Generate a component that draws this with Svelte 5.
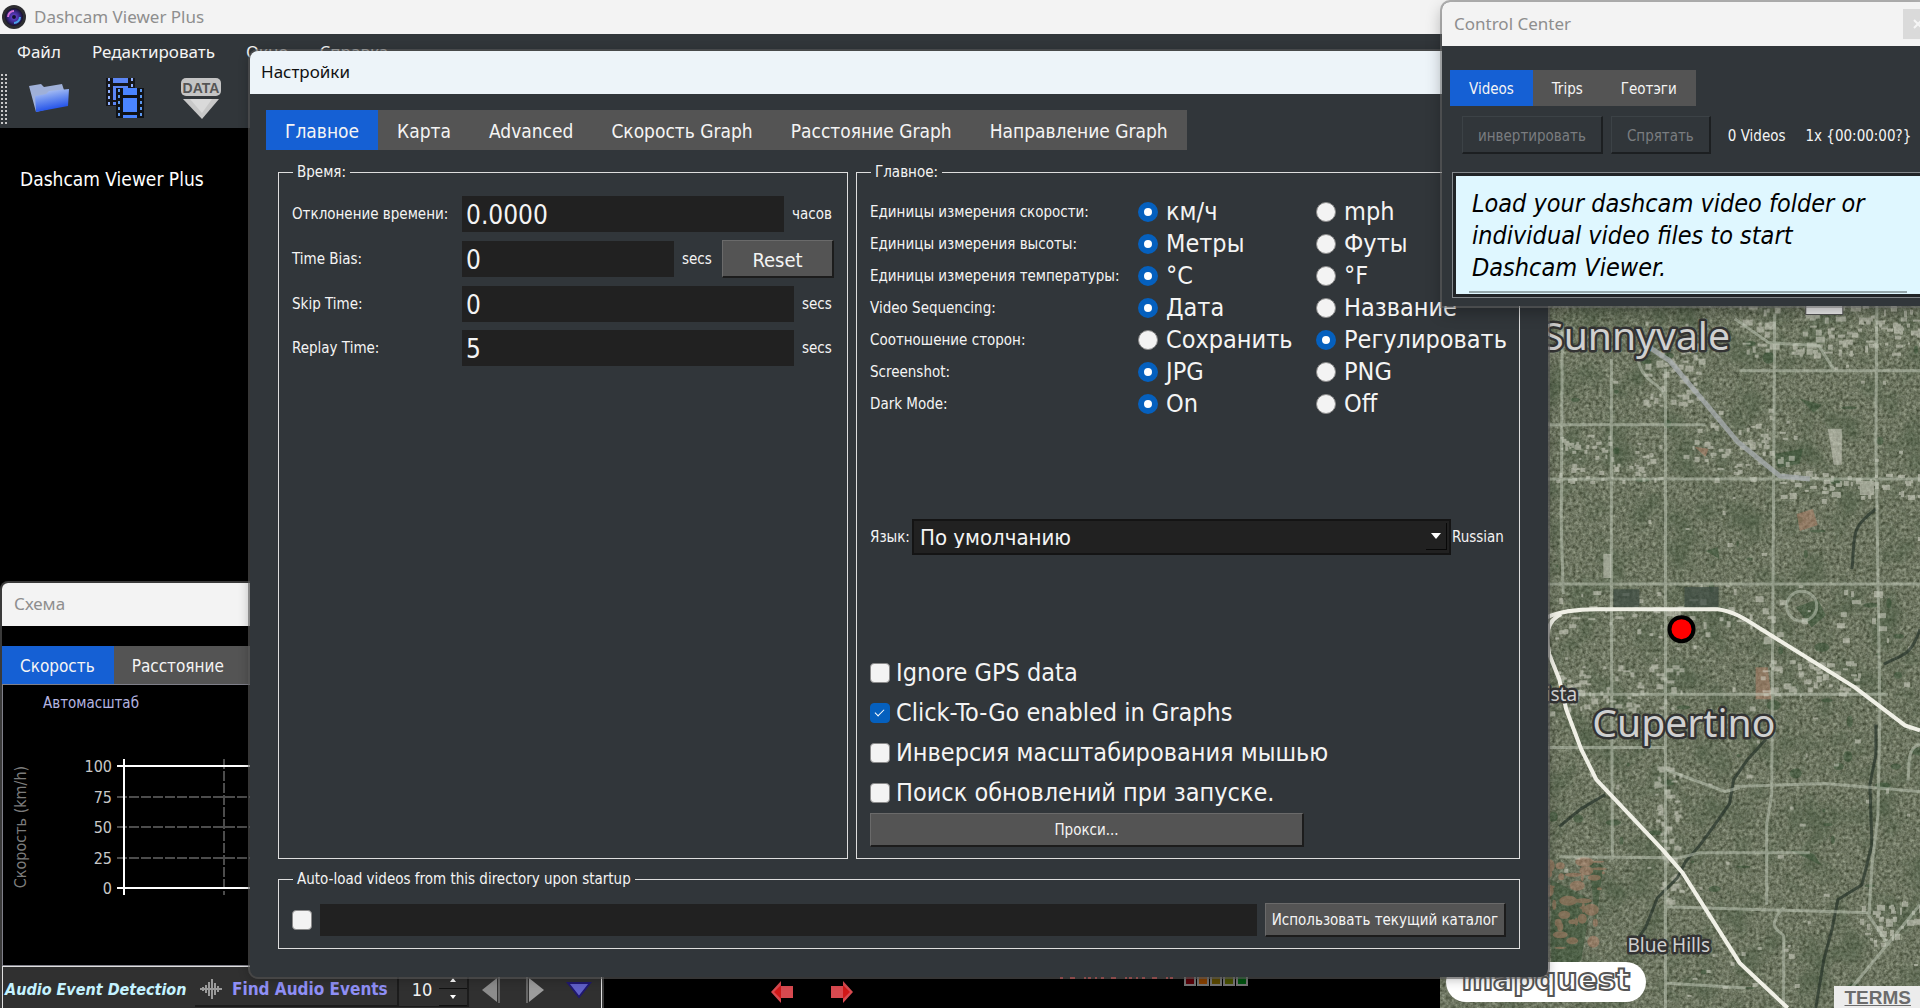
<script lang="ts">
	interface Choice {
		name: string;
		label: string;
		options: [string, string];
		picked: number;
	}

	const menus = ['Файл', 'Редактировать', 'Окно', 'Справка'];
	const settingsTabs = [
		'Главное',
		'Карта',
		'Advanced',
		'Скорость Graph',
		'Расстояние Graph',
		'Направление Graph'
	];
	const chartTabs = ['Скорость', 'Расстояние', 'Направление'];
	const centerTabs = ['Videos', 'Trips', 'Геотэги'];

	let choices: Choice[] = $state([
		{ name: 'speed', label: 'Единицы измерения скорости:', options: ['км/ч', 'mph'], picked: 0 },
		{ name: 'height', label: 'Единицы измерения высоты:', options: ['Метры', 'Футы'], picked: 0 },
		{ name: 'temp', label: 'Единицы измерения температуры:', options: ['°C', '°F'], picked: 0 },
		{ name: 'sequence', label: 'Video Sequencing:', options: ['Дата', 'Название'], picked: 0 },
		{ name: 'aspect', label: 'Соотношение сторон:', options: ['Сохранить', 'Регулировать'], picked: 1 },
		{ name: 'shot', label: 'Screenshot:', options: ['JPG', 'PNG'], picked: 0 },
		{ name: 'dark', label: 'Dark Mode:', options: ['On', 'Off'], picked: 0 }
	]);

	let checks = $state([
		{ label: 'Ignore GPS data', on: false },
		{ label: 'Click-To-Go enabled in Graphs', on: true },
		{ label: 'Инверсия масштабирования мышью', on: false },
		{ label: 'Поиск обновлений при запуске.', on: false }
	]);

	let offset = $state('0.0000');
	let bias = $state('0');
	let skip = $state('0');
	let replay = $state('5');
	let autoload = $state(false);
	let directory = $state('');
	let audioCount = $state(10);
	let settingsTab = $state(0);
	let chartTab = $state(0);
	let centerTab = $state(0);

	const ticks = [100, 75, 50, 25, 0];
	const leds = ['#5a0008', '#8a4200', '#5c4a00', '#4a5200', '#005410'];

	// small repeatable generator, so the ground cover is the same on every load
	let seed = 11;
	function rnd() {
		seed = (seed * 16807) % 2147483647;
		return seed / 2147483647;
	}

	function patches(n: number, x: number, y: number, w: number, h: number, size: number) {
		return Array.from({ length: n }, () => ({
			x: Math.round(x + rnd() * w),
			y: Math.round(y + rnd() * h),
			w: Math.round(2 + rnd() * size),
			h: Math.round(2 + rnd() * size * 0.7)
		}));
	}

	const roofs = [
		...patches(90, 1740, 305, 180, 50, 8),
		...patches(50, 1640, 345, 60, 60, 7),
		...patches(50, 1690, 420, 100, 60, 5),
		...patches(60, 1550, 435, 110, 50, 4),
		...patches(50, 1780, 470, 140, 30, 6),
		...patches(70, 1550, 665, 130, 45, 6),
		...patches(50, 1760, 660, 100, 35, 6),
		...patches(50, 1655, 760, 22, 140, 5),
		...patches(60, 1550, 590, 340, 50, 7),
		...patches(30, 1860, 900, 60, 40, 8),
		...patches(120, 1548, 310, 372, 690, 4)
	];
	const woods = patches(60, 1548, 330, 372, 670, 14);
	const soil = patches(34, 1548, 860, 60, 90, 16);
</script>

<div class="desktop">
	<main class="main-window">
		<header class="title-bar">
			<svg class="app-icon" viewBox="0 0 24 24" aria-hidden="true">
				<defs>
					<radialGradient id="lens">
						<stop offset="0" stop-color="#f0c8f0" />
						<stop offset="0.25" stop-color="#5c3cc0" />
						<stop offset="0.6" stop-color="#3c2a8c" />
						<stop offset="1" stop-color="#141028" />
					</radialGradient>
				</defs>
				<circle cx="12" cy="12" r="12" fill="#2c2c30" />
				<circle cx="12" cy="12" r="9" fill="url(#lens)" />
				<path d="M6 12a6 6 0 0 1 6-6" fill="none" stroke="#d070d8" stroke-width="2" />
				<path d="M18 12a6 6 0 0 1-6 6" fill="none" stroke="#4aa0e8" stroke-width="2" />
				<circle cx="12" cy="12" r="2" fill="#101030" />
			</svg>
			<span>Dashcam Viewer Plus</span>
		</header>
		<nav class="menu-bar">
			{#each menus as menu}
				<button>{menu}</button>
			{/each}
		</nav>
		<div class="toolbar">
			<span class="grip"></span>
			<button aria-label="Open folder">
				<svg width="42" height="40" viewBox="0 0 42 40">
					<defs>
						<linearGradient id="folder" x1="0" y1="0" x2="0.3" y2="1">
							<stop offset="0" stop-color="#c4d4f4" />
							<stop offset="0.5" stop-color="#6c90f0" />
							<stop offset="1" stop-color="#1c4ce8" />
						</linearGradient>
					</defs>
					<path d="M1 8l12-2 3 3 18-3 2 6-4 16-24 6z" fill="#9fb0d8" />
					<path d="M8 34L7 18l11-2 3-3 20-2-1 17z" fill="url(#folder)" />
				</svg>
			</button>
			<button aria-label="Open videos">
				<svg width="42" height="42" viewBox="0 0 42 42">
					<path d="M2 1h29v28H2z" fill="#15161a" />
					<path d="M9 1h15v5H9zM9 9h15v14H9zM9 25h15v3H9z" fill="#5c86f4" />
					<path d="M5 1v27M28 1v27" stroke="#8fb0ff" stroke-width="2" stroke-dasharray="3 3" />
					<path d="M12 11h28v30H12z" fill="#101216" />
					<path d="M19 11h14v7H19zM19 21h14v14H19zM19 38h14v3H19z" fill="#4a84ff" />
					<path d="M15 12v28M37 12v28" stroke="#5c98f0" stroke-width="2" stroke-dasharray="3 3" />
				</svg>
			</button>
			<button aria-label="Export data">
				<svg width="42" height="42" viewBox="0 0 42 42">
					<rect x="1" y="1" width="40" height="18" rx="5" fill="#c4c4c4" />
					<path d="M3 22h36L22 42z" fill="#c8c8c8" />
					<path d="M10 22h22L22 36z" fill="#dadada" />
					<text x="21" y="16" class="data-text">DATA</text>
				</svg>
			</button>
		</div>

		<div class="workspace">
			<section class="video">
				<p>Dashcam Viewer Plus</p>
				<div class="transport">
					<button aria-label="Previous">
						<svg width="24" height="24" viewBox="0 0 24 24">
							<path d="M1 12L11 1v5h12v12H11v5z" fill="#d84a50" />
							<path d="M4 12l7-7v14z" fill="#d01818" />
						</svg>
					</button>
					<button aria-label="Next">
						<svg width="24" height="24" viewBox="0 0 24 24">
							<path d="M23 12L13 1v5H1v12h12v5z" fill="#d84a50" />
							<path d="M20 12l-7-7v14z" fill="#d01818" />
						</svg>
					</button>
					<svg class="motion" width="116" height="4" viewBox="0 0 116 4" aria-hidden="true">
						<path d="M0 2h116" stroke="#ff4040" stroke-width="2" stroke-dasharray="3 7 5 9 2 2 3 4 2 4" />
					</svg>
					<span class="leds">
						{#each leds as led}
							<svg width="12" height="10" viewBox="0 0 12 10">
								<rect width="12" height="10" fill="#777" />
								<rect x="2" width="8" height="8" fill={led} />
							</svg>
						{/each}
					</span>
				</div>
			</section>

			<section class="map">
				<svg class="tiles" viewBox="1441 128 479 880" preserveAspectRatio="xMidYMax slice" aria-hidden="true">
					<defs>
						<filter id="ground" x="0" y="0" width="100%" height="100%" color-interpolation-filters="sRGB">
							<feTurbulence type="fractalNoise" baseFrequency="0.3" numOctaves="3" seed="4" />
							<feColorMatrix
								values="0.42 0.18 0 0 0.13  0.42 0.18 0 0 0.16  0.42 0.16 0 0 0.09  0 0 0 0 1"
							/>
						</filter>
						<filter id="cover" x="0" y="0" width="100%" height="100%" color-interpolation-filters="sRGB">
							<feTurbulence type="fractalNoise" baseFrequency="0.03" numOctaves="3" seed="9" />
							<feColorMatrix values="0 0 0 0 0.24  0 0 0 0 0.32  0 0 0 0 0.22  2.4 0 0 0 -1.1" />
						</filter>
					</defs>
					<rect x="1441" y="128" width="479" height="880" filter="url(#ground)" />
					<rect x="1441" y="128" width="479" height="880" filter="url(#cover)" opacity="0.5" />

					<g fill="#2c4a2c" opacity="0.45">
						{#each woods as p}
							<ellipse cx={p.x} cy={p.y} rx={p.w / 2} ry={p.h / 2} />
						{/each}
						<path d="M1775 455l28-5-3 15-22 4zM1796 608l22-8 8 16-14 12zM1800 400l22 6-8 8zM1706 552l12-4 2 12zM1790 850l24 4 8 12z" />
						<path d="M1552 880l40 20-10 60-30 20zM1590 860l14 6-8 60z" />
					</g>
					<g fill="#b48068" opacity="0.5">
						{#each soil as p}
							<ellipse cx={p.x} cy={p.y} rx={p.w / 2} ry={p.h / 2} />
						{/each}
						<path d="M1797 515l16-5 5 16-18 6zM1756 668h12l4 32h-16zM1695 448l14 2-3 8z" />
					</g>
					<g fill="#dcdcd0" opacity="0.5">
						{#each roofs as p}
							<rect x={p.x} y={p.y} width={p.w} height={p.h} />
						{/each}
						<path d="M1604 555h8v24h-8zM1828 430h14v36h-8zM1860 482h14v14h-14z" />
					</g>
					<path d="M1685 588h34v20h-34zM1614 590h26v18h-26z" fill="#3c4a42" opacity="0.7" />

					<g class="creek">
						<path d="M1876 510c-28 20-20 30-24 60M1920 630c-10 30-20 25-36 35" />
						<path d="M1766 740l-18 20-14 20 -4 24-14 20-16 22-14 16-8 16-20 20-12 30-10 14" />
						<path d="M1876 725l0 30-6 30 2 60-10 40-24 15-6 30-8 30-8 48" />
						<path d="M1606 795l-24 14-22 18" />
					</g>

					<g class="street">
						<path d="M1563 325l-1 200 2 70M1612 360v230l1 270M1666 370v638M1775 315l-3 480-5 30v80M1877 306l-1 130 4 280-2 100-6 50-3 50 20 30" />
						<path d="M1740 372h180M1548 426h158M1548 480h372M1548 585h372M1548 695h340M1548 748h118M1735 787l90-3 95 8M1560 857l120 1 20-5h110M1666 907l205 6M1666 983l80 5" />
						<path d="M1639 362c5 25 28 22 27 42M1735 320l34 24 50 3 15 24M1666 770l60 22 14-4" />
						<path d="M1784 908c-20 20-2 24 0 28v72M1850 990l70-85M1920 745c-14 4-10 20-12 36" />
						<circle cx="1802" cy="607" r="15" />
					</g>
					<path class="rail" d="M1640 342l30 20 38 45 30 36 42 34 30 3" />
					<g class="highway">
						<path d="M1548 618c10-5 30-8 50-8h120c16 2 28 10 42 19l95 59 50 38 15 5" />
						<path d="M1562 615c-14 6-16 20-12 40l10 25 7 30 15 40 15 30 66 70 20 23 57 90 48 45" />
					</g>
					<path d="M1806 300h37v16h-37z" fill="#f0f0f0" stroke="#555" />

					<g class="places">
						<text x="1543" y="351" class="city">Sunnyvale</text>
						<text x="1593" y="738" class="city">Cupertino</text>
						<text x="1535" y="702" class="town">Vista</text>
						<text x="1628" y="952" class="town">Blue Hills</text>
					</g>
					<circle cx="1682" cy="630" r="12" fill="#ff0000" stroke="#000" stroke-width="4" />
				</svg>
				<span class="brand">mapquest</span>
				<a class="terms" href="#terms">TERMS</a>
			</section>
		</div>
	</main>

	<section class="chart-window">
		<header class="title">Схема</header>
		<div class="tabs" role="tablist">
			{#each chartTabs as tab, i}
				<button role="tab" aria-selected={i === chartTab} class:active={i === chartTab} onclick={() => (chartTab = i)}>{tab}</button>
			{/each}
		</div>
		<div class="plot">
			<span class="auto">Автомасштаб</span>
			<svg width="590" height="240" viewBox="3 725 590 240">
				<g stroke="#4c4c4c" stroke-width="2" stroke-dasharray="10 2">
					<path d="M117 797h476M117 827h476M117 858h476M224 759v136M324 759v136" />
				</g>
				<path d="M117 766h476M117 888h476M124 759v136" stroke="#fff" stroke-width="2" />
				{#each ticks as tick, i}
					<text x="112" y={772 + i * 30.5} class="tick">{tick}</text>
				{/each}
				<text transform="translate(26 827) rotate(-90)" class="axis">Скорость (km/h)</text>
			</svg>
		</div>
		<footer class="audio-bar">
			<strong>Audio Event Detection</strong>
			<button class="find">
				<svg width="24" height="20" viewBox="0 0 24 20" aria-hidden="true">
					<path d="M1 10h22M4 8v4M7 6v8M10 3v14M13 0v20M16 4v12M19 7v6" stroke="#9a9a9a" stroke-width="2" />
				</svg>
				Find Audio Events
			</button>
			<div class="spin">
				<input aria-label="Audio event count" bind:value={audioCount} />
				<span class="spin-buttons">
					<button aria-label="Increase" onclick={() => audioCount++}>
						<svg width="6" height="4" viewBox="0 0 6 4"><path d="M0 4l3-4 3 4z" fill="#fff" /></svg>
					</button>
					<button aria-label="Decrease" onclick={() => audioCount--}>
						<svg width="6" height="4" viewBox="0 0 6 4"><path d="M0 0l3 4 3-4z" fill="#fff" /></svg>
					</button>
				</span>
			</div>
			<button class="step" aria-label="Previous event">
				<svg width="20" height="26" viewBox="0 0 20 26"><path d="M1 13L16 1v24z" fill="#8c8c8c" /><path d="M17 0h2v26h-2z" fill="#666" /></svg>
			</button>
			<button class="step" aria-label="Next event">
				<svg width="20" height="26" viewBox="0 0 20 26"><path d="M19 13L4 1v24z" fill="#9c9c9c" /><path d="M1 0h2v26H1z" fill="#666" /></svg>
			</button>
			<button class="step" aria-label="Event list">
				<svg width="26" height="18" viewBox="0 0 26 18"><path d="M2 2h22L13 16z" fill="#6060c8" stroke="#201870" stroke-width="2" /></svg>
			</button>
		</footer>
	</section>

	<section class="settings">
		<header class="title">Настройки</header>
		<div class="tabs" role="tablist">
			{#each settingsTabs as tab, i}
				<button role="tab" aria-selected={i === settingsTab} class:active={i === settingsTab} onclick={() => (settingsTab = i)}>{tab}</button>
			{/each}
		</div>

		<div class="panels">
			<fieldset class="time">
				<legend>Время:</legend>
				<div class="field">
					<label for="offset">Отклонение времени:</label>
					<input id="offset" bind:value={offset} />
					<span class="long">часов</span>
				</div>
				<div class="field">
					<label for="bias">Time Bias:</label>
					<input id="bias" bind:value={bias} />
					<span>secs</span>
					<button class="raised reset" onclick={() => (bias = '0')}>Reset</button>
				</div>
				<div class="field">
					<label for="skip">Skip Time:</label>
					<input id="skip" bind:value={skip} />
					<span>secs</span>
				</div>
				<div class="field">
					<label for="replay">Replay Time:</label>
					<input id="replay" bind:value={replay} />
					<span>secs</span>
				</div>
			</fieldset>

			<fieldset class="general">
				<legend>Главное:</legend>
				<div class="choices">
					{#each choices as choice}
						<div class="choice" role="radiogroup" aria-label={choice.label}>
							<span>{choice.label}</span>
							{#each choice.options as option, i}
								<label>
									<input type="radio" name={choice.name} value={i} bind:group={choice.picked} />
									{option}
								</label>
							{/each}
						</div>
					{/each}
				</div>
				<div class="language">
					<label for="language">Язык:</label>
					<div class="combo">
						<select id="language">
							<option>По умолчанию</option>
							<option>English</option>
							<option>Русский</option>
						</select>
						<span class="arrow">
							<svg width="10" height="6" viewBox="0 0 10 6" aria-hidden="true"><path d="M0 0h10L5 6z" fill="#fff" /></svg>
						</span>
					</div>
					<span>Russian</span>
				</div>
				<div class="checks">
					{#each checks as check}
						<label>
							<input type="checkbox" bind:checked={check.on} />
							{check.label}
						</label>
					{/each}
					<button class="raised proxy">Прокси...</button>
				</div>
			</fieldset>
		</div>

		<fieldset class="autoload">
			<legend>Auto-load videos from this directory upon startup</legend>
			<input type="checkbox" aria-label="Auto-load videos" bind:checked={autoload} />
			<input class="directory" aria-label="Directory" bind:value={directory} />
			<button class="raised">Использовать текущий каталог</button>
		</fieldset>
	</section>

	<section class="center-window">
		<header class="title">
			Control Center
			<button class="close" aria-label="Close">
				<svg width="7" height="10" viewBox="0 0 7 10"><path d="M1 1l8 8M9 1L1 9" stroke="#f6f6f6" stroke-width="2" /></svg>
			</button>
		</header>
		<div class="tabs" role="tablist">
			{#each centerTabs as tab, i}
				<button role="tab" aria-selected={i === centerTab} class:active={i === centerTab} onclick={() => (centerTab = i)}>{tab}</button>
			{/each}
		</div>
		<div class="video-tools">
			<button disabled>инвертировать</button>
			<button disabled>Спрятать</button>
			<span>0 Videos</span>
			<span>1x &#123;00:00:00?&#125;</span>
		</div>
		<div class="video-list">
			<p>Load your dashcam video folder or individual video files to start Dashcam Viewer.</p>
		</div>
	</section>
</div>

<style>
	:global(body) {
		margin: 0;
		overflow: hidden;
	}

	.desktop {
		position: relative;
		height: 100vh;
		min-height: 960px;
		overflow: hidden;
		background: #000;
		color: #f4f4f4;
		font-family: 'DejaVu Sans Condensed', 'Noto Sans', sans-serif;
		font-size: 15px;
		line-height: 20px;
	}

	button,
	input,
	select {
		box-sizing: border-box;
		margin: 0;
		padding: 0;
		border: 0;
		border-radius: 0;
		background: none;
		color: inherit;
		font: inherit;
	}

	svg {
		display: block;
	}

	/* main window */
	.main-window {
		display: flex;
		flex-direction: column;
		height: 100%;
		background: #31363a;
	}

	.title-bar,
	.title {
		box-sizing: border-box;
		flex: none;
		display: flex;
		align-items: center;
		background: #f3f3f3;
		color: #8e8e8e;
		font-family: 'Noto Sans', sans-serif;
		font-size: 17px;
	}

	.title-bar {
		height: 34px;
		gap: 8px;
		padding-left: 2px;
	}

	.app-icon {
		width: 24px;
		height: 24px;
	}

	.menu-bar {
		display: flex;
		gap: 31px;
		height: 36px;
		padding-left: 17px;
		font-family: 'Noto Sans', sans-serif;
		font-size: 17px;
	}

	.toolbar {
		display: flex;
		align-items: center;
		gap: 34px;
		height: 58px;
	}

	.toolbar button {
		padding-bottom: 3px;
	}

	.grip {
		width: 8px;
		height: 52px;
		margin-right: -14px;
		background: radial-gradient(circle, #c8c8c8 1px, transparent 1px) 0 0 / 4px 4px;
	}

	.data-text {
		font-family: 'Liberation Sans', sans-serif;
		font-size: 14px;
		font-weight: bold;
		fill: #555;
		text-anchor: middle;
	}

	.workspace {
		flex: 1;
		display: flex;
		min-height: 0;
	}

	.video {
		flex: 3;
		display: flex;
		flex-direction: column;
		justify-content: space-between;
		background: #000;
	}

	.video p {
		margin: 0;
		padding: 41px 20px;
		color: #fff;
		font-size: 19px;
	}

	.transport {
		display: flex;
		align-items: center;
		gap: 36px;
		height: 32px;
		padding-left: 770px;
	}

	.motion {
		align-self: flex-start;
		margin: 0 -28px 0 170px;
	}

	.leds {
		display: flex;
		gap: 1px;
		align-self: flex-start;
	}

	/* map */
	.map {
		flex: 1;
		position: relative;
		overflow: hidden;
	}

	.tiles {
		width: 100%;
		height: 100%;
	}

	.creek,
	.street,
	.rail,
	.highway {
		fill: none;
	}

	.creek {
		stroke: #26332a;
		stroke-width: 3;
		opacity: 0.7;
	}

	.street {
		stroke: #c4ccbc;
		stroke-width: 3;
		opacity: 0.5;
	}

	.rail {
		stroke: #a8aeb0;
		stroke-width: 5;
		opacity: 0.75;
	}

	.highway {
		stroke: #f0f0e6;
		stroke-width: 4;
	}

	.places {
		font-family: 'Noto Sans', sans-serif;
		fill: #d0d0d0;
		stroke: #333;
		stroke-width: 5;
		stroke-linejoin: round;
		paint-order: stroke;
	}

	.city {
		font-size: 39px;
	}

	.town {
		font-size: 19px;
	}

	.brand {
		position: absolute;
		bottom: 6px;
		left: 6px;
		width: 200px;
		height: 40px;
		border-radius: 20px;
		background: #fff;
		color: #fff;
		font-family: 'DejaVu Sans', sans-serif;
		font-size: 30px;
		font-weight: bold;
		line-height: 36px;
		text-align: center;
		-webkit-text-stroke: 2px #555;
	}

	.terms {
		position: absolute;
		right: 0;
		bottom: 0;
		padding: 2px 9px 0 11px;
		background: #ececec;
		color: #6c6c6c;
		font-family: 'Liberation Sans', sans-serif;
		font-size: 19px;
		font-weight: bold;
	}

	/* shared tabs */
	.tabs {
		flex: none;
		display: flex;
		align-self: flex-start;
		background: #545454;
	}

	.tabs .active {
		background: #1560d4;
	}

	/* chart window */
	.chart-window {
		position: absolute;
		top: 583px;
		bottom: 0;
		left: 2px;
		width: 600px;
		display: flex;
		flex-direction: column;
		border-radius: 6px 6px 0 0;
		background: #000;
		box-shadow: 0 0 0 2px #3a3a3a;
	}

	.chart-window .title {
		height: 43px;
		margin-bottom: 20px;
		padding: 0 12px 2px;
		border-radius: 6px 6px 0 0;
	}

	.chart-window .tabs button {
		height: 38px;
		padding: 2px 19px 0 18px;
		font-size: 17px;
	}

	.plot {
		flex: 1;
		display: flex;
		flex-direction: column;
		justify-content: space-between;
		border: 1px solid #80808a;
	}

	.auto {
		padding: 8px 40px 0;
		color: #b4b4e0;
	}

	.tick {
		fill: #c8c8c8;
		font-size: 16px;
		text-anchor: end;
	}

	.axis {
		fill: #7c7c7c;
		font-size: 16px;
		text-anchor: middle;
	}

	.audio-bar {
		box-sizing: border-box;
		display: flex;
		align-items: center;
		height: 42px;
		padding: 4px 0 0 2px;
		border: 1px solid #e0e0e0;
		border-bottom: 0;
		background: #303030;
	}

	.audio-bar strong {
		width: 190px;
		color: #c4f2ff;
		font-size: 16px;
		font-style: italic;
		white-space: nowrap;
	}

	.find {
		display: flex;
		align-items: center;
		gap: 9px;
		height: 34px;
		padding: 0 9px 0 4px;
		border-right: 2px solid #1c1c1c;
		border-bottom: 2px solid #1c1c1c;
		color: #8f8ff6;
		font-size: 17px;
		font-weight: bold;
		white-space: nowrap;
	}

	.spin {
		display: flex;
		height: 34px;
		border-right: 2px solid #1c1c1c;
		border-bottom: 1px solid #1c1c1c;
	}

	.spin input {
		width: 40px;
		padding: 2px 0 0 13px;
		font-size: 18px;
	}

	.spin-buttons {
		display: flex;
		flex-direction: column;
		width: 28px;
	}

	.spin-buttons button {
		flex: 1;
		display: grid;
		place-items: center;
		border-bottom: 1px solid #111;
	}

	.step {
		display: grid;
		place-items: center;
		width: 44px;
	}

	/* settings dialog */
	.settings {
		position: absolute;
		top: 51px;
		right: 372px;
		bottom: 31px;
		left: 250px;
		display: flex;
		flex-direction: column;
		border-radius: 8px;
		background: #31363a;
		box-shadow:
			0 0 0 2px rgba(90, 90, 90, 0.6),
			0 2px 12px rgba(0, 0, 0, 0.3);
	}

	.settings .title {
		height: 43px;
		padding: 0 11px 2px;
		border-radius: 8px 8px 0 0;
		background: #edf4f9;
		color: #111;
	}

	.settings .tabs {
		margin: 16px 16px 0;
	}

	.settings .tabs button {
		height: 40px;
		padding: 2px 19px 0;
		font-size: 19px;
	}

	.panels {
		flex: 1;
		display: grid;
		grid-template-columns: 570fr 664fr;
		gap: 8px;
		margin: 12px 28px 10px;
	}

	fieldset {
		min-width: 0;
		margin: 0;
		padding: 14px 13px 11px;
		border: 1px solid #dedede;
	}

	legend {
		height: 20px;
		margin-left: 1px;
		padding: 0 4px;
	}

	.field {
		display: flex;
		align-items: center;
		gap: 8px;
		margin-bottom: 8px;
	}

	.field label {
		width: 162px;
		white-space: nowrap;
	}

	.field span {
		width: 32px;
	}

	.field .long {
		width: 42px;
	}

	.field input {
		flex: 1;
		min-width: 0;
		height: 36px;
		padding: 2px 4px 0;
		background: #212121;
		font-size: 26px;
	}

	.raised {
		border: 1px solid #6a6a6a;
		border-right: 2px solid #1c1c1c;
		border-bottom: 2px solid #1c1c1c;
		background: #545454;
	}

	.reset {
		width: 112px;
		height: 38px;
		padding-top: 2px;
		font-size: 20px;
	}

	.general {
		display: flex;
		flex-direction: column;
		justify-content: space-between;
	}

	.choice {
		display: grid;
		grid-template-columns: 268px 178px 1fr;
		align-items: center;
		height: 32px;
		white-space: nowrap;
	}

	.choice label,
	.checks label {
		display: flex;
		align-items: center;
		gap: 8px;
		font-size: 25px;
		line-height: 32px;
	}

	input[type='radio'],
	input[type='checkbox'] {
		flex: none;
		appearance: none;
		width: 20px;
		height: 20px;
		border: 1px solid #8a8a8a;
		border-radius: 50%;
		background: #f3f3f3;
	}

	input[type='radio']:checked {
		border: 6px solid #0560be;
		background: #fff;
	}

	input[type='checkbox'] {
		border-radius: 4px;
	}

	input[type='checkbox']:checked {
		border-color: #0560be;
		background: #0560be;
	}

	input[type='checkbox']:checked::before {
		content: '';
		display: block;
		width: 8px;
		height: 4px;
		margin: 5px 4px;
		border: solid #fff;
		border-width: 0 0 1px 1px;
		transform: rotate(-45deg);
	}

	.language {
		display: flex;
		align-items: center;
		gap: 1px;
	}

	.language label {
		width: 41px;
	}

	.language > span {
		width: 54px;
	}

	.combo {
		flex: 1;
		display: grid;
		align-items: center;
	}

	.combo select,
	.arrow {
		grid-area: 1 / 1;
	}

	.combo select {
		appearance: none;
		width: 100%;
		height: 36px;
		padding: 2px 6px 0;
		border: 2px solid #141414;
		background: #212121;
		font-size: 22px;
	}

	.arrow {
		display: grid;
		place-items: center;
		justify-self: end;
		width: 20px;
		height: 26px;
		margin-right: 4px;
		border-right: 1px solid #080808;
		border-bottom: 1px solid #080808;
		pointer-events: none;
	}

	.checks label {
		height: 40px;
		gap: 6px;
	}

	.proxy {
		width: 434px;
		height: 34px;
	}

	.autoload {
		display: flex;
		align-items: center;
		gap: 8px;
		margin: 0 28px 28px;
	}

	.directory {
		flex: 1;
		height: 32px;
		background: #212121;
	}

	.autoload .raised {
		height: 34px;
		padding: 0 6px;
	}

	/* control center */
	.center-window {
		position: absolute;
		top: 2px;
		right: 0;
		width: 478px;
		display: flex;
		flex-direction: column;
		border-radius: 8px 0 0 0;
		background: #31363a;
		box-shadow:
			0 0 0 2px rgba(110, 110, 110, 0.5),
			0 6px 16px rgba(0, 0, 0, 0.3);
	}

	.center-window .title {
		justify-content: space-between;
		height: 44px;
		padding-left: 12px;
		border-radius: 8px 0 0 0;
	}

	.close {
		display: grid;
		place-items: center end;
		width: 17px;
		height: 30px;
		background: #dadada;
	}

	.center-window .tabs {
		margin: 24px 8px 10px;
	}

	.center-window .tabs button {
		height: 36px;
		padding: 2px 19px 0;
	}

	.video-tools {
		display: flex;
		align-items: center;
		gap: 8px;
		padding-left: 20px;
		white-space: nowrap;
	}

	.video-tools button {
		height: 38px;
		padding: 2px 15px 0;
		border: 1px solid #3c4246;
		border-right: 2px solid #1c1f21;
		border-bottom: 2px solid #1c1f21;
		color: #7a7d80;
	}

	.video-tools span {
		margin: 2px 3px 0 9px;
	}

	.video-list {
		margin: 18px -4px 8px 10px;
		border: 1px solid #84888c;
		padding: 3px;
		background: #202326;
	}

	.video-list p {
		margin: 0;
		padding: 12px 50px 10px 16px;
		background: linear-gradient(#94a6aa, #94a6aa) 13px 115px / 438px 2px no-repeat #dff7ff;
		color: #000;
		font-size: 25px;
		font-style: italic;
		line-height: 32px;
	}
</style>
